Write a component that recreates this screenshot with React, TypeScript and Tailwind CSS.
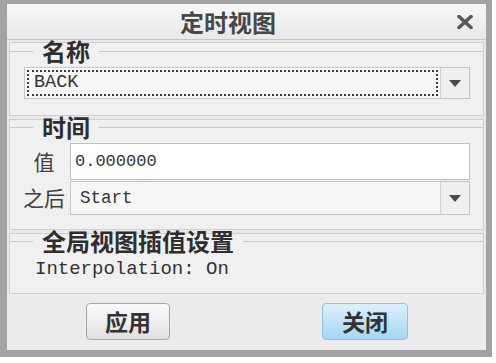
import React from "react";

const cjk = { fontFamily: '"Noto Sans CJK SC", "Noto Sans", sans-serif' };
const mono = { fontFamily: '"Liberation Mono", "DejaVu Sans Mono", monospace' };

function Arrow() {
  return (
    <div className="w-[29px] h-full flex items-center justify-center border-l border-[#d2d2d2] bg-[#efefef]">
      <svg width="12" height="7" viewBox="0 0 12 7">
        <path d="M0 0 L12 0 L6 7 Z" fill="#4a4a4a" />
      </svg>
    </div>
  );
}

function Legend({ label, h }: { label: string; h: string }) {
  return (
    <div className={`flex items-center ${h}`}>
      <div className="w-[23px] h-px bg-[#c8c8c8]" />
      <div className="px-[9px] text-[24px] leading-[16px] font-bold text-[#2e2e2e] whitespace-nowrap" style={cjk}>
        {label}
      </div>
      <div className="flex-1 h-px bg-[#c8c8c8]" />
    </div>
  );
}

export default function App() {
  return (
    <div className="w-[496px] h-[363px] bg-white">
      <div className="w-[492px] h-[357px] bg-[#a3a3a3] pl-[7px] pr-[6px] pt-[4px] pb-[7px]">
        <div className="w-full h-full flex flex-col bg-[#e9e9e9]">
          {/* title bar */}
          <div className="h-[36px] flex items-center bg-gradient-to-b from-[#f8f8f8] to-[#e8e8e8] border-b border-[#c6c6c6]">
            <div className="flex-1 text-center text-[24px] leading-[24px] font-bold text-[#474747]" style={cjk}>
              定时视图
            </div>
            <div className="w-[37px] pl-[8px] flex items-center">
              <svg width="16" height="14" viewBox="0 0 16 14">
                <path d="M2 1.5 L14 12.5 M14 1.5 L2 12.5" stroke="#585858" strokeWidth="3.6" strokeLinecap="round" />
              </svg>
            </div>
          </div>

          {/* group 1 */}
          <div className="mt-[2px] mx-[2px] border border-[#cfcfcf] bg-[#f0f0f0]">
            <Legend label="名称" h="h-[16px]" />
            <div className="mt-[8px] ml-[14px] w-[446px] h-[32px] flex border border-[#c4c4c4] bg-[#f7f7f7]">
              <div className="flex-1 p-[2px]">
                <div className="h-full border-2 border-dotted border-[#3a3a3a] pl-[5px] flex items-center text-[18.5px] text-[#333]" style={mono}>
                  BACK
                </div>
              </div>
              <Arrow />
            </div>
            <div className="h-[16px]" />
          </div>

          {/* group 2 */}
          <div className="mt-[3px] mx-[2px] border border-[#cfcfcf] bg-[#f0f0f0]">
            <Legend label="时间" h="h-[14px]" />
            <div className="mt-[9px] flex items-center h-[37px]">
              <div className="ml-[12px] w-[44px] text-center text-[21px] text-[#404040]" style={cjk}>值</div>
              <div className="ml-[4px] w-[400px] h-full border border-[#bfbfbf] bg-white flex items-center pl-[4px] text-[17px] text-[#333]" style={mono}>
                0.000000
              </div>
            </div>
            <div className="mt-[1px] flex items-center h-[34px]">
              <div className="ml-[12px] w-[44px] text-center text-[21px] text-[#404040]" style={cjk}>之后</div>
              <div className="ml-[4px] w-[400px] h-full border border-[#c4c4c4] bg-[#f6f6f6] flex">
                <div className="flex-1 flex items-center pl-[9px] text-[17.5px] text-[#333]" style={mono}>Start</div>
                <Arrow />
              </div>
            </div>
            <div className="h-[14px]" />
          </div>

          {/* group 3 */}
          <div className="mt-[3px] mx-[2px] border border-[#cfcfcf] bg-[#f0f0f0]">
            <Legend label="全局视图插值设置" h="h-[14px]" />
            <div className="mt-[11px] h-[20px] pl-[25px] flex items-center text-[19px] text-[#333]" style={mono}>
              Interpolation: On
            </div>
            <div className="h-[14px]" />
          </div>

          {/* footer */}
          <div className="flex-1 bg-[#ececec]">
            <div className="mt-[9px] flex pl-[79px]">
              <div
                className="w-[84px] h-[37px] flex items-center justify-center rounded-[4px] border border-[#a9a9a9] bg-gradient-to-b from-[#fbfbfb] to-[#e0e0e0] text-[23px] font-bold text-[#333]"
                style={cjk}
              >
                应用
              </div>
              <div
                className="ml-[152px] w-[86px] h-[37px] flex items-center justify-center rounded-[4px] border border-[#8cc4e9] bg-gradient-to-b from-[#dcf0fc] to-[#a6d6f4] text-[23px] font-bold text-[#333]"
                style={cjk}
              >
                关闭
              </div>
            </div>
          </div>
        </div>
      </div>
    </div>
  );
}
